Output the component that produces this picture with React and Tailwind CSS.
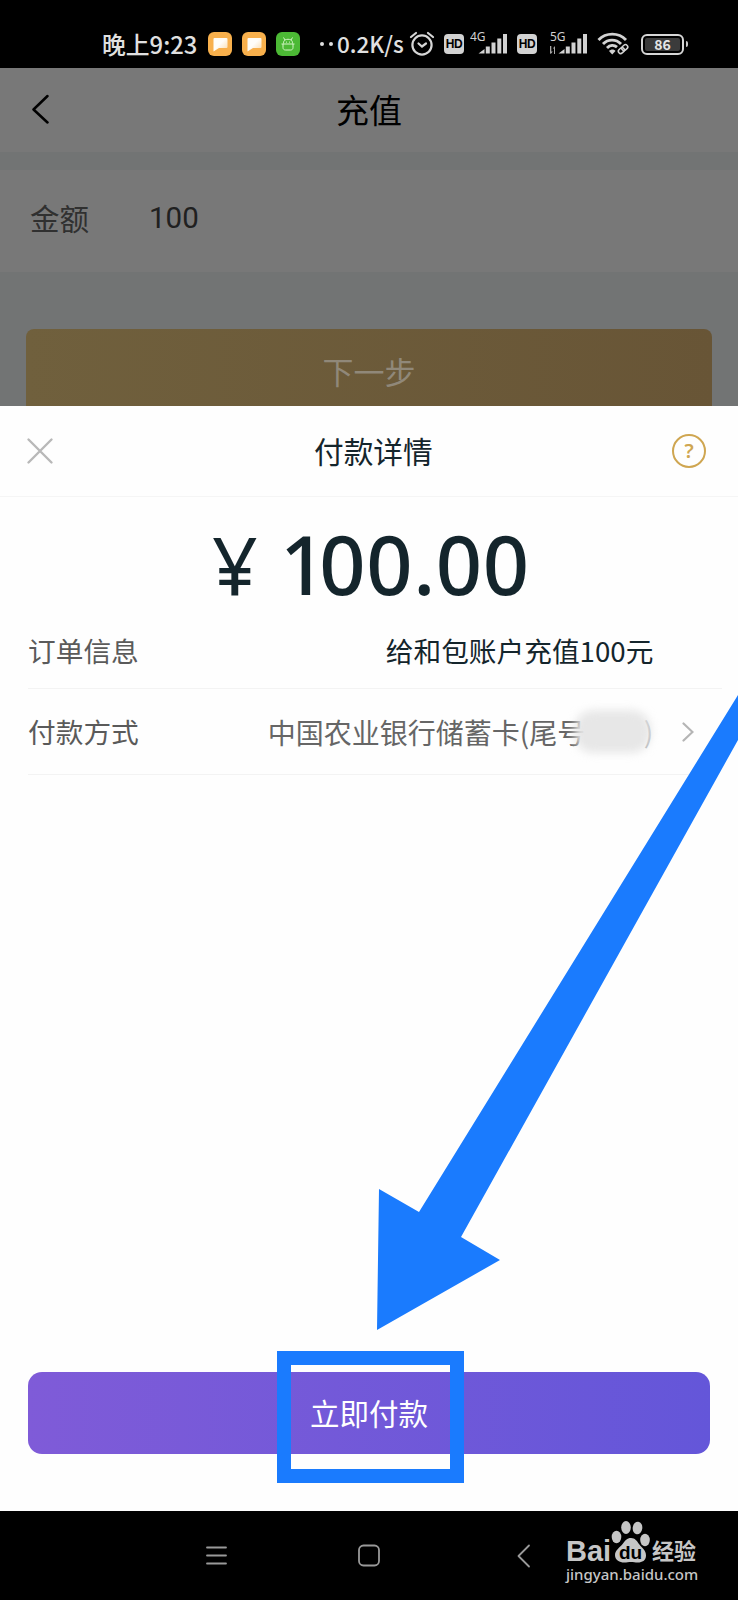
import clsx from 'clsx';

function ChatBadge() {
  return (
    <svg width="24" height="24" viewBox="0 0 24 24">
      <defs>
        <linearGradient id="chat" x1="0" y1="0" x2="1" y2="1">
          <stop offset="0.45" stopColor="#fffdf8" />
          <stop offset="1" stopColor="#fbd9a6" />
        </linearGradient>
      </defs>
      <rect width="24" height="24" rx="6" fill="#f8b04c" />
      <path d="M6.500 6h12a1 1 0 0 1 1 1v8a1 1 0 0 1-1 1h-7.500L5.500 19.500V7a1 1 0 0 1 1-1z" fill="url(#chat)" />
    </svg>
  );
}

function RobotBadge() {
  return (
    <svg width="24" height="24" viewBox="0 0 24 24" fill="none" stroke="#d5f5c8" strokeWidth="1">
      <rect width="24" height="24" rx="6" fill="#4cb935" stroke="none" />
      <path d="M7.500 5.500l1.500 2.500c2-1 4-1 6 0l1.500-2.500M7.500 11.500c0-2 .5-3 1.500-3.500M16.500 11.500c0-2-.5-3-1.500-3.500M5.500 12h13M7 12v3.500c0 1.700 1 2.500 2.500 2.500h5c1.500 0 2.500-.8 2.500-2.500V12" />
      <path d="M10 10.200h.8M13.200 10.200h.8" strokeWidth="1.200" />
    </svg>
  );
}

function AlarmIcon() {
  return (
    <svg width="26" height="26" viewBox="0 0 26 26" fill="none" stroke="#d6d6d6" strokeWidth="2.200" strokeLinecap="round">
      <circle cx="13" cy="14" r="9.600" />
      <path d="M2 6 7 2M24 6 19 2M9.500 12.500l3.500 3 4-3" />
    </svg>
  );
}

function HdBadge() {
  return (
    <span className="flex h-[20px] w-[20px] items-center justify-center rounded-[4px] bg-[#d2d2d2] font-['Liberation_Sans'] text-[12px] leading-none font-bold tracking-[-0.3px] text-black">
      HD
    </span>
  );
}

function Signal({ label, arrows }) {
  return (
    <svg width="40" height="36" viewBox="0 -6 40 36" fill="#d2d2d2">
      <text x="0" y="8.500" fontSize="12" fontFamily="Noto Sans, sans-serif">{label}</text>
      {arrows && <path d="M0 14h1.300v5.500h1.500l-2 2.500-1-1zM4 22v-5.500H2.800L5 14v8z" opacity=".8" />}
      <path d="M8.500 21.500 14.500 17v4.500zM15.800 14.500h4v7h-4zM21.500 10.500h4v11h-4zM27.300 6.500h4v15h-4zM33 2h4v19.500h-4z" />
    </svg>
  );
}

function WifiIcon() {
  return (
    <svg width="34" height="26" viewBox="0 0 34 26" fill="none" stroke="#d2d2d2" strokeWidth="2.900">
      <path d="M1.500 9C9 1.200 21.500 1.200 29 9M6 13c5-5.200 13-5.200 18 0M10 17c3-3 7-3.300 10-.8" />
      <path d="M12 20c2-2 5-2 6.500 0L15.200 23.500z" fill="#d2d2d2" stroke="none" />
      <g strokeWidth="1.500" transform="rotate(-42 26 18)">
        <rect x="20.500" y="15.800" width="6.500" height="4.600" rx="2.300" />
        <rect x="25" y="15.800" width="6.500" height="4.600" rx="2.300" />
      </g>
    </svg>
  );
}

function Battery() {
  return (
    <div className="flex items-center gap-[2px]">
      <div className="flex h-[21px] w-[43px] shrink-0 rounded-[6px] border-2 border-[#d6d6d6] p-[2px]">
        <span className="flex flex-1 items-center justify-center rounded-[2px] bg-[#3b3b3b] text-[14px] leading-none font-bold text-[#e6e6e6]">
          86
        </span>
      </div>
      <span className="h-[6px] w-[2px] rounded-r bg-[#c8c8c8]" />
    </div>
  );
}

function StatusBar() {
  return (
    <div className="flex h-[68px] shrink-0 items-center bg-black pt-[20px] pl-[102px] text-[#e0e0e0]">
      <span className="w-[106px] pb-[1px] text-[23.800px] font-medium whitespace-nowrap">晚上9:23</span>
      <div className="flex gap-[10px]">
        <ChatBadge />
        <ChatBadge />
        <RobotBadge />
      </div>
      <span className="ml-[20px] flex items-center gap-[5px]">
        <i className="h-1 w-1 rounded-full bg-[#e0e0e0]" />
        <i className="h-1 w-1 rounded-full bg-[#e0e0e0]" />
      </span>
      <span className="ml-[4px] w-[72px] text-[22.500px] font-medium whitespace-nowrap">0.2K/s</span>
      <AlarmIcon />
      <div className="ml-[9px] flex items-center">
        <HdBadge />
        <div className="ml-[6px] w-[47px]"><Signal label="4G" /></div>
        <HdBadge />
        <div className="ml-[13px] w-[47px]"><Signal label="5G" arrows /></div>
      </div>
      <WifiIcon />
      <div className="ml-[10px]"><Battery /></div>
    </div>
  );
}

// Page behind the sheet, already dimmed
function RechargePage() {
  return (
    <div className="flex h-[338px] shrink-0 flex-col overflow-hidden bg-[#727474]">
      <div className="flex h-[84px] shrink-0 items-center bg-[#787878] pb-[2px] pl-[31px] text-black">
        <svg width="20" height="30" viewBox="0 0 20 30" fill="none" stroke="currentColor" strokeWidth="2.500" strokeLinecap="round" strokeLinejoin="round">
          <path d="M16.500 2 2.500 15.500l14 13" />
        </svg>
        <h1 className="ml-[285px] text-[33px] leading-none">充值</h1>
      </div>
      <div className="mt-[18px] flex h-[102px] shrink-0 items-center bg-[#787878] pb-[7px] pl-[30px] text-[29.500px] text-[#303030]">
        <span className="w-[119px]">金额</span>
        <span className="pt-[2px] font-[Roboto] text-[29.500px] text-[#202020]">100</span>
      </div>
      <button className="mx-[26px] mt-[57px] h-[85px] shrink-0 rounded-t-lg bg-linear-to-r from-[#70603d] to-[#685536] text-[31px] text-[#908879]">
        下一步
      </button>
    </div>
  );
}

function DetailRow({ label, className, children }) {
  return (
    <div className={clsx('ml-[28px] flex items-center border-b border-[#f3f3f3] text-[27.700px]', className)}>
      <span className="text-[#5a5a5a]">{label}</span>
      {children}
    </div>
  );
}

function PaymentSheet() {
  return (
    <div className="flex h-[1105px] shrink-0 flex-col bg-[#fefefe]">
      <div className="flex h-[91px] items-center border-b border-[#f5f5f5] pl-[26px]">
        <svg width="28" height="28" viewBox="0 0 28 28" stroke="#b8b8b8" strokeWidth="2.400" strokeLinecap="round">
          <path d="M2.500 2.500l23 23M25.500 2.500l-23 23" />
        </svg>
        <h2 className="ml-[260px] w-[358px] text-[29.700px] leading-none text-[#14252c]">付款详情</h2>
        <span className="flex h-[34px] w-[34px] items-center justify-center rounded-full border-[2.500px] border-[#cfa651] font-['Noto_Sans'] text-[20px] leading-none font-semibold text-[#cfa651]">
          ?
        </span>
      </div>

      <div className="flex h-[116px] items-center pt-[17px] pl-[212px] font-['Noto_Sans'] text-[#14252c]">
        <span className="w-[68px] text-[80px] leading-none">¥</span>
        <span className="text-[81px] leading-none font-medium tracking-[0.6px]">
          <span className="tracking-[-7px]">1</span>00.00
        </span>
      </div>

      <DetailRow label="订单信息" className="mr-[16px] h-[76px]">
        <span className="ml-[247px] text-[#14252c]">给和包账户充值100元</span>
      </DetailRow>
      <DetailRow label="付款方式" className="mr-[28px] h-[86px]">
        <div className="relative ml-[129px] w-[414px] text-[28px] whitespace-nowrap text-[#666]">
          中国农业银行储蓄卡(尾号
          <span className="absolute top-[-1px] left-[376px] text-[#b0b0b0]">)</span>
          <div className="absolute top-[-1px] left-[306px] h-[43px] w-[77px] rounded-[20px] bg-[#e6e6e6]/95 blur-[4px]" />
        </div>
        <svg width="12" height="20" viewBox="0 0 12 20" fill="none" stroke="#b5b5b5" strokeWidth="2.200" strokeLinecap="round">
          <path d="M1.500 1.500 10.500 10l-9 8.500" />
        </svg>
      </DetailRow>

      <div className="relative mt-auto mr-[28px] mb-[57px] ml-[28px]">
        <button className="h-[82px] w-full rounded-[14px] bg-linear-to-r from-[#7f5bd8] to-[#6456d9] pb-[2px] text-[29.500px] text-white">
          立即付款
        </button>
        <div className="pointer-events-none absolute top-[-21px] left-[249px] h-[132px] w-[187px] border-[14.500px] border-[#1a7bfe]" />
      </div>
    </div>
  );
}

function Watermark() {
  return (
    <div className="absolute top-[9px] left-[566px] text-[#c6c6c6]">
      <div className="flex h-[44px] items-end">
        <span className="w-[45px] pb-[3px] font-['Liberation_Sans'] text-[29px] leading-[20px] font-bold">Bai</span>
        <svg width="40" height="44" viewBox="0 0 40 44" fill="currentColor">
          <ellipse cx="5.500" cy="17" rx="4.800" ry="6.200" />
          <ellipse cx="15" cy="7.500" rx="4.800" ry="6.500" />
          <ellipse cx="26.500" cy="8" rx="4.800" ry="6.300" transform="rotate(8 26.500 8)" />
          <ellipse cx="34" cy="20" rx="4.800" ry="6.200" />
          <path d="M20 18c4 0 6 3 8 6 3 4 7 6 7 11.500 0 5-4 7-8 7-3 0-4.500-.5-7-.5s-4 .5-7 .5c-4 0-9-2-9-7.500 0-5 5-7.500 8-11.500 2-3 4-5.500 8-5.500z" />
          <text x="19.500" y="38.500" textAnchor="middle" fontSize="19" fontWeight="700" fontFamily="Liberation Sans, sans-serif" fill="#000">du</text>
        </svg>
        <span className="ml-[1px] pb-[4px] text-[22px] leading-[22px] font-bold">经验</span>
      </div>
      <div className="mt-[1px] font-['Noto_Sans'] text-[15px] leading-[18px] font-medium">jingyan.baidu.com</div>
    </div>
  );
}

function NavBar() {
  return (
    <div className="relative flex h-[89px] shrink-0 items-center bg-black pl-[205px]">
      <svg width="326" height="24" viewBox="0 0 326 24" fill="none" stroke="#999" strokeWidth="1.800" strokeLinecap="round" strokeLinejoin="round">
        <path d="M2 3.500h19M2 11.500h19M2 19.500h19" />
        <rect x="154" y="1.500" width="20" height="20" rx="4.500" />
        <path d="M324 1.500 313.500 12 324 22.500" />
      </svg>
      <Watermark />
    </div>
  );
}

export default function App() {
  return (
    <div className="relative flex h-[1600px] w-[738px] flex-col overflow-hidden font-['Noto_Sans_CJK_SC',sans-serif]">
      <StatusBar />
      <RechargePage />
      <PaymentSheet />
      <NavBar />
      <svg className="pointer-events-none absolute inset-0" width="738" height="1600" viewBox="0 0 738 1600">
        <path d="M738 695 419 1212l-40-23-2 141 123-70-39-23L738 740z" fill="#1a7bfe" />
      </svg>
    </div>
  );
}
